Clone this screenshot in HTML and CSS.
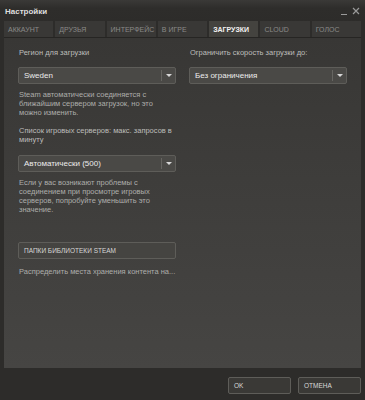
FILE: index.html
```html
<!DOCTYPE html>
<html lang="ru">
<head>
<meta charset="utf-8">
<link rel="stylesheet" href="styles.css">
</head>
<body>
<div class="window">
  <div class="titlebar">
    <span class="title">Настройки</span>
    <div class="controls">
      <span class="min"></span>
      <svg class="close" width="8" height="8" viewBox="0 0 8 8"><path d="M1 1L7 7M7 1L1 7" stroke="#9a9a9a" stroke-width="1.2"/></svg>
    </div>
  </div>
  <div class="tabs">
    <div class="tab">АККАУНТ</div>
    <div class="tab">ДРУЗЬЯ</div>
    <div class="tab">ИНТЕРФЕЙС</div>
    <div class="tab">В ИГРЕ</div>
    <div class="tab active">ЗАГРУЗКИ</div>
    <div class="tab">CLOUD</div>
    <div class="tab">ГОЛОС</div>
  </div>
  <div class="panel">
    <div class="col">
      <div class="label">Регион для загрузки</div>
      <div class="select"><span class="val">Sweden</span><span class="arrow"></span></div>
      <div class="desc">Steam автоматически соединяется с ближайшим сервером загрузок, но это можно изменить.</div>
      <div class="label l2">Список игровых серверов: макс. запросов в минуту</div>
      <div class="select s2"><span class="val">Автоматически (500)</span><span class="arrow"></span></div>
      <div class="desc">Если у вас возникают проблемы с соединением при просмотре игровых серверов, попробуйте уменьшить это значение.</div>
      <div class="btn lib">ПАПКИ БИБЛИОТЕКИ STEAM</div>
      <div class="desc d3">Распределить места хранения контента на...</div>
    </div>
    <div class="col">
      <div class="label">Ограничить скорость загрузки до:</div>
      <div class="select"><span class="val">Без ограничения</span><span class="arrow"></span></div>
    </div>
  </div>
  <div class="footer">
    <div class="btn fbtn">OK</div>
    <div class="btn fbtn">ОТМЕНА</div>
  </div>
</div>
</body>
</html>
```

FILE: styles.css
```css
* { box-sizing: border-box; }
html, body { margin: 0; padding: 0; }
body {
  background: #2c2b29;
  font-family: "Liberation Sans", Arial, sans-serif;
  width: 365px;
  height: 400px;
  overflow: hidden;
}
.window {
  width: 365px;
  height: 400px;
  display: flex;
  flex-direction: column;
  background: #2d2c2a;
}
.titlebar {
  height: 21px;
  display: flex;
  align-items: center;
  justify-content: space-between;
  padding: 0 5px 0 5px;
  background: linear-gradient(#3a3937, #2e2d2b 40%, #2d2c2a);
}
.title {
  font-size: 8px;
  font-weight: bold;
  color: #dedede;
  margin-top: 1px;
}
.controls {
  display: flex;
  align-items: center;
  gap: 5px;
  margin-top: 1px;
}
.min {
  width: 6px;
  height: 1px;
  background: #9a9a9a;
  margin-top: 6px;
}
.tabs {
  display: flex;
  gap: 2px;
  padding: 0 4px 0 4px;
  height: 16px;
}
.tab {
  flex: 1;
  background: #393836;
  color: #8a8a88;
  font-size: 7px;
  display: flex;
  align-items: center;
  padding-left: 4px;
}
.tab.active {
  background: #44433f;
  color: #f2f2f2;
  font-weight: bold;
}
.panel {
  margin: 0 4px;
  height: 331px;
  border-top: 1px solid #262523;
  background: linear-gradient(#383735, #464543);
  display: grid;
  grid-template-columns: 158px 158px;
  column-gap: 13px;
  padding: 10px 14px;
  align-content: start;
}
.col {
  display: flex;
  flex-direction: column;
}
.label {
  font-size: 7.5px;
  line-height: 9px;
  color: #bdbdbb;
  padding-left: 1px;
}
.select {
  margin-top: 10px;
  height: 17px;
  border: 1px solid #5e5d59;
  border-radius: 2px;
  background: #4a4946;
  display: flex;
  align-items: center;
  justify-content: space-between;
}
.select.s2 { margin-top: 11px; }
.val {
  font-size: 8px;
  color: #ececec;
  padding-left: 5px;
}
.arrow {
  width: 14px;
  height: 11px;
  border-left: 1px solid #666561;
  position: relative;
}
.arrow::after {
  content: "";
  position: absolute;
  left: 4px;
  top: 4px;
  border-left: 3px solid transparent;
  border-right: 3px solid transparent;
  border-top: 3px solid #d8d8d8;
}
.desc {
  margin-top: 6px;
  font-size: 7.5px;
  line-height: 9px;
  color: #adadab;
  padding-left: 1px;
  padding-right: 4px;
}
.l2 { margin-top: 9px; }
.btn {
  border: 1px solid #5e5d59;
  border-radius: 2px;
  background: #454441;
  color: #d6d6d6;
  font-size: 6.5px;
  display: flex;
  align-items: center;
  padding-left: 5px;
}
.lib {
  margin-top: 28px;
  height: 17px;
}
.d3 {
  margin-top: 8px;
  white-space: nowrap;
  padding-right: 0;
}
.footer {
  flex: 1;
  display: flex;
  justify-content: flex-end;
  align-items: flex-start;
  gap: 7px;
  padding: 9px 4px 0 0;
}
.fbtn {
  width: 63px;
  height: 17px;
  background: #3a3936;
  color: #d8d8d8;
}
```
